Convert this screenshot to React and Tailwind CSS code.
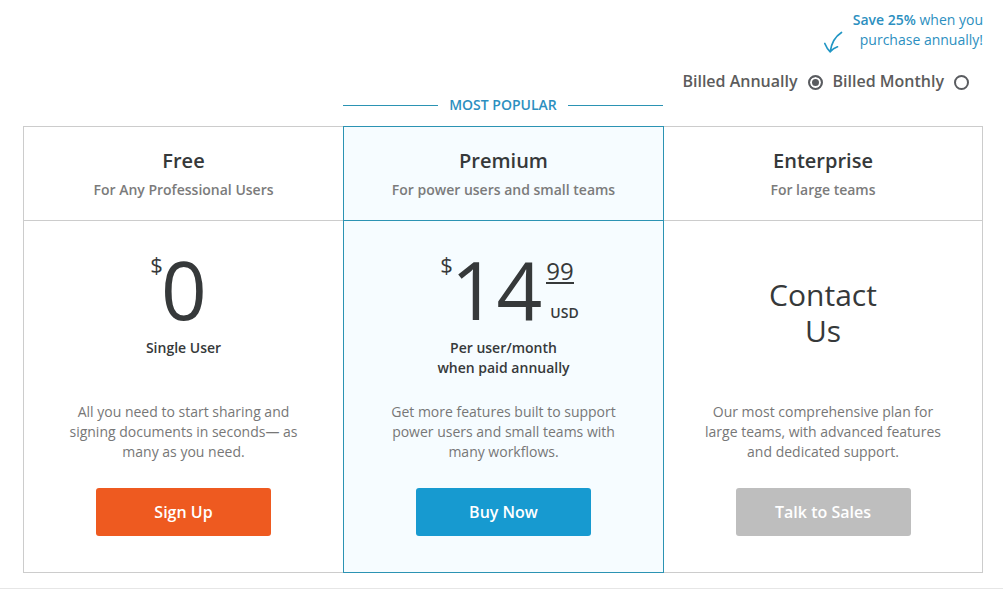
import React from "react";

const plans = [
  {
    name: "Free",
    audience: "For Any Professional Users",
    amount: "0",
    note: ["Single User"],
    text: ["All you need to start sharing and", "signing documents in seconds— as", "many as you need."],
    action: "Sign Up",
    button: "bg-[#ee5a20]",
    frame: "border-[#ccc] border-r-0 bg-white",
  },
  {
    name: "Premium",
    audience: "For power users and small teams",
    amount: "14",
    cents: "99",
    note: ["Per user/month", "when paid annually"],
    text: ["Get more features built to support", "power users and small teams with", "many workflows."],
    action: "Buy Now",
    button: "bg-[#179ad0]",
    frame: "border-[#2b93b3] z-10 -mr-px bg-[#f6fcff]",
    popular: true,
  },
  {
    name: "Enterprise",
    audience: "For large teams",
    contact: ["Contact", "Us"],
    text: ["Our most comprehensive plan for", "large teams, with advanced features", "and dedicated support."],
    action: "Talk to Sales",
    button: "bg-[#bebebe]",
    frame: "border-[#ccc] bg-white",
  },
];

function Lines({ items }) {
  return items.map((line) => (
    <span key={line} className="block">
      {line}
    </span>
  ));
}

function Price({ plan }) {
  return (
    <div>
      <div className={`flex h-[98px] items-start justify-center text-[#36393a] ${plan.cents ? "pl-3" : "pr-2.5"}`}>
        <span className="-mr-0.5 pt-2.5 text-[22px] font-medium leading-7">$</span>
        <span className="text-[80px] leading-[98px]">{plan.amount}</span>
        {plan.cents && (
          <span className="flex flex-col items-start pt-5 pl-1">
            <span className="border-b-2 border-[#36393a] text-2xl leading-[22px]">{plan.cents}</span>
            <span className="pt-[19px] pl-1 text-sm font-semibold leading-5">USD</span>
          </span>
        )}
      </div>
      <p className="text-sm font-semibold leading-5 text-[#36393a]">
        <Lines items={plan.note} />
      </p>
    </div>
  );
}

function PlanCard({ plan }) {
  return (
    <section className={`flex flex-col border text-center ${plan.frame}`}>
      <header className={`border-b py-5 ${plan.popular ? "border-[#2b93b3]" : "border-[#ccc]"}`}>
        <h2 className="text-xl font-semibold leading-7 text-[#36393a]">{plan.name}</h2>
        <p className="pt-[5px] text-sm font-semibold leading-5 text-[#7b7b7b]">{plan.audience}</p>
      </header>
      <div className="flex h-[181px] flex-col pt-[19px]">
        {plan.contact ? (
          <p className="pt-[37px] text-3xl leading-9 text-[#36393a]">
            <Lines items={plan.contact} />
          </p>
        ) : (
          <Price plan={plan} />
        )}
      </div>
      <p className="text-sm leading-5 text-[#777]">
        <Lines items={plan.text} />
      </p>
      <div className="pt-[26px] pb-9">
        <button
          type="button"
          className={`h-12 w-[175px] rounded-[3px] text-base font-semibold text-white ${plan.button}`}
        >
          {plan.action}
        </button>
      </div>
    </section>
  );
}

function BillingOption({ label, ...rest }) {
  return (
    <label className="flex items-center gap-2.5 text-base font-semibold leading-6 text-[#5c5c5c]">
      {label}
      <input
        type="radio"
        name="billing"
        className="mt-0.5 size-[15px] appearance-none rounded-full border-2 border-[#5a5c60] checked:bg-[#5a5c60] checked:shadow-[inset_0_0_0_2px_white]"
        {...rest}
      />
    </label>
  );
}

export default function App() {
  return (
    <main className="border-b border-[#e6e6e6] bg-white pt-2.5 pr-5 pb-[15px] pl-[23px] font-['Open_Sans',sans-serif]">
      <div className="flex items-end justify-end gap-2.5 text-sm leading-5 text-[#2c8fc0]">
        <svg
          viewBox="0 0 20 20"
          className="size-5"
          fill="none"
          stroke="#2196c4"
          strokeWidth="1.7"
          strokeLinecap="round"
          strokeLinejoin="round"
          overflow="visible"
          aria-hidden="true"
        >
          <path d="M18.500 2.500C13 6 8.500 12 7.200 21.800M1.800 13.500C3 16.500 4.800 19.500 7.200 21.800C8.800 19.800 11.500 17.800 14.500 16.800" />
        </svg>
        <p className="text-right">
          <b className="font-semibold">Save 25%</b> when you
          <br />
          purchase annually!
        </p>
      </div>
      <fieldset className="flex justify-end gap-2.5 pt-[19px] pr-3.5">
        <BillingOption label="Billed Annually" defaultChecked />
        <BillingOption label="Billed Monthly" />
      </fieldset>
      <div className="mx-auto flex w-1/3 items-center gap-[11px] pt-0.5 pb-[11px] text-sm font-semibold leading-5 text-[#2c8fc0]">
        <span className="h-px flex-1 bg-[#2b93b3]" />
        MOST POPULAR
        <span className="h-px flex-1 bg-[#2b93b3]" />
      </div>
      <div className="grid grid-cols-3">
        {plans.map((plan) => (
          <PlanCard key={plan.name} plan={plan} />
        ))}
      </div>
    </main>
  );
}
